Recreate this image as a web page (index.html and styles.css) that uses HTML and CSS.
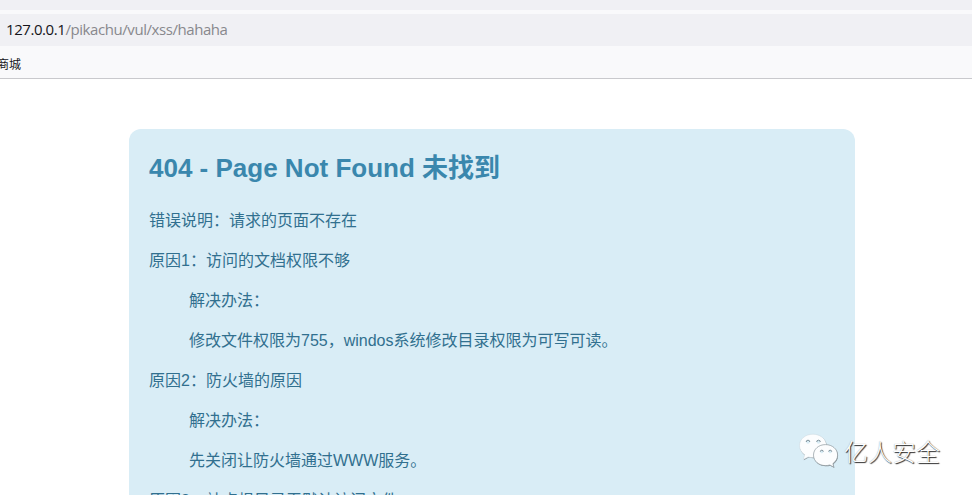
FILE: index.html
```html
<!DOCTYPE html>
<html lang="zh-CN">
<head>
<meta charset="utf-8">
<title>404 - Page Not Found</title>
<link rel="stylesheet" href="styles.css">
</head>
<body>
<header class="browser">
  <div class="tabstrip"></div>
  <div class="address"><span class="url"><span class="host">127.0.0.1</span>/pikachu/vul/xss/hahaha</span></div>
  <div class="bookmarks"><span class="bookmark">商城</span></div>
</header>
<main class="card">
  <h1>404 - Page Not Found 未找到</h1>
  <p>错误说明：请求的页面不存在</p>
  <p>原因1：访问的文档权限不够</p>
  <p class="sub">解决办法：</p>
  <p class="sub">修改文件权限为755，windos系统修改目录权限为可写可读。</p>
  <p>原因2：防火墙的原因</p>
  <p class="sub">解决办法：</p>
  <p class="sub">先关闭让防火墙通过WWW服务。</p>
  <p>原因3：站点根目录无默认访问文件</p>
</main>
<div class="watermark">
  <svg class="logo" width="42" height="38" viewBox="0 0 42 38">
    <g fill="#8a959a" transform="translate(.5 .7)">
      <path d="M15 1.200C7.500 1.200 1.500 6 1.500 12.500c0 4 2 7 5.200 9.200L5.300 26.500l5-2.600c1.600.5 3 .7 4.700.7 7.500 0 13.500-5.200 13.500-11.800S22.500 1.200 15 1.200Z"/>
      <path d="M27.500 11.600c-6.800 0-12 4.500-12 10.500s5.200 10.500 12 10.500c1.500 0 3-.2 4.300-.6l4.100 2.200-1-3.600c2.900-2 4.700-4.900 4.700-8.500 0-6-5.300-10.500-12.100-10.500Z"/>
    </g>
    <path fill="#fcfdfe" stroke="#c3d0d6" stroke-width=".4" d="M15 1.200C7.500 1.200 1.500 6 1.500 12.500c0 4 2 7 5.200 9.200L5.300 26.500l5-2.600c1.600.5 3 .7 4.700.7 7.500 0 13.500-5.200 13.500-11.800S22.500 1.200 15 1.200Z"/>
    <path fill="#fcfdfe" stroke="#8d989e" stroke-width=".7" d="M27.500 11.600c-6.800 0-12 4.500-12 10.500s5.200 10.500 12 10.500c1.500 0 3-.2 4.300-.6l4.100 2.200-1-3.600c2.900-2 4.700-4.900 4.700-8.500 0-6-5.300-10.500-12.100-10.500Z"/>
    <g fill="#d9ecf5">
      <circle cx="10" cy="9" r="1.800"/><circle cx="20.500" cy="9" r="1.800"/>
      <circle cx="23.800" cy="18.700" r="1.500"/><circle cx="32.200" cy="18.700" r="1.500"/>
    </g>
    <path fill="none" stroke="#71858e" stroke-width=".9" d="M8.200 9a1.800 1.800 0 0 1 3.600 0M18.700 9a1.800 1.800 0 0 1 3.600 0M22.300 18.700a1.500 1.500 0 0 1 3 0M30.700 18.700a1.500 1.500 0 0 1 3 0"/>
  </svg>
  <span class="brand">亿人安全</span>
</div>
</body>
</html>
```
FILE: styles.css
```css
* { box-sizing: border-box; }
body {
  margin: 0;
  height: 495px;
  overflow: hidden;
  background: #fff;
  font-family: "Liberation Sans", "Noto Sans CJK SC", sans-serif;
}
.browser {
  height: 79px;
  background: #f9f9fb;
  border-bottom: 1px solid #c9c9cd;
}
.tabstrip { height: 10px; background: #f0f0f4; }
.address {
  height: 32px;
  margin-top: 4px;
  padding-left: 6px;
  background: #f0f0f4;
  color: #88888d;
  font: 15px/30px "Open Sans", "Noto Sans", sans-serif;
  letter-spacing: -0.43px;
  white-space: nowrap;
}
.host { color: #15141a; }
.bookmarks {
  height: 32px;
  color: #15141a;
  font: 12px/35px "Noto Sans CJK SC", sans-serif;
}
.bookmark { margin-left: -3px; }
.card {
  width: 726px;
  height: 366px;
  overflow: hidden;
  margin: 50px 0 0 129px;
  padding: 19px 20px 0;
  background: #d9edf6;
  border-radius: 12px 12px 0 0;
  color: #31708f;
}
h1 {
  margin: 0 0 23px;
  color: #3a87ad;
  font-size: 26px;
  line-height: 40px;
  white-space: nowrap;
}
p {
  margin: 0 0 20px;
  font-size: 16px;
  line-height: 20px;
  white-space: nowrap;
}
.sub { padding-left: 40px; }
.watermark {
  position: absolute;
  left: 798px;
  top: 433px;
  display: flex;
  align-items: flex-start;
  gap: 4px;
}
.brand {
  color: #fff;
  font: 300 24px/35px "Noto Sans CJK SC", sans-serif;
  text-shadow: 1px 1px 1px #222, 0 0 1px #999;
  white-space: nowrap;
}
```
